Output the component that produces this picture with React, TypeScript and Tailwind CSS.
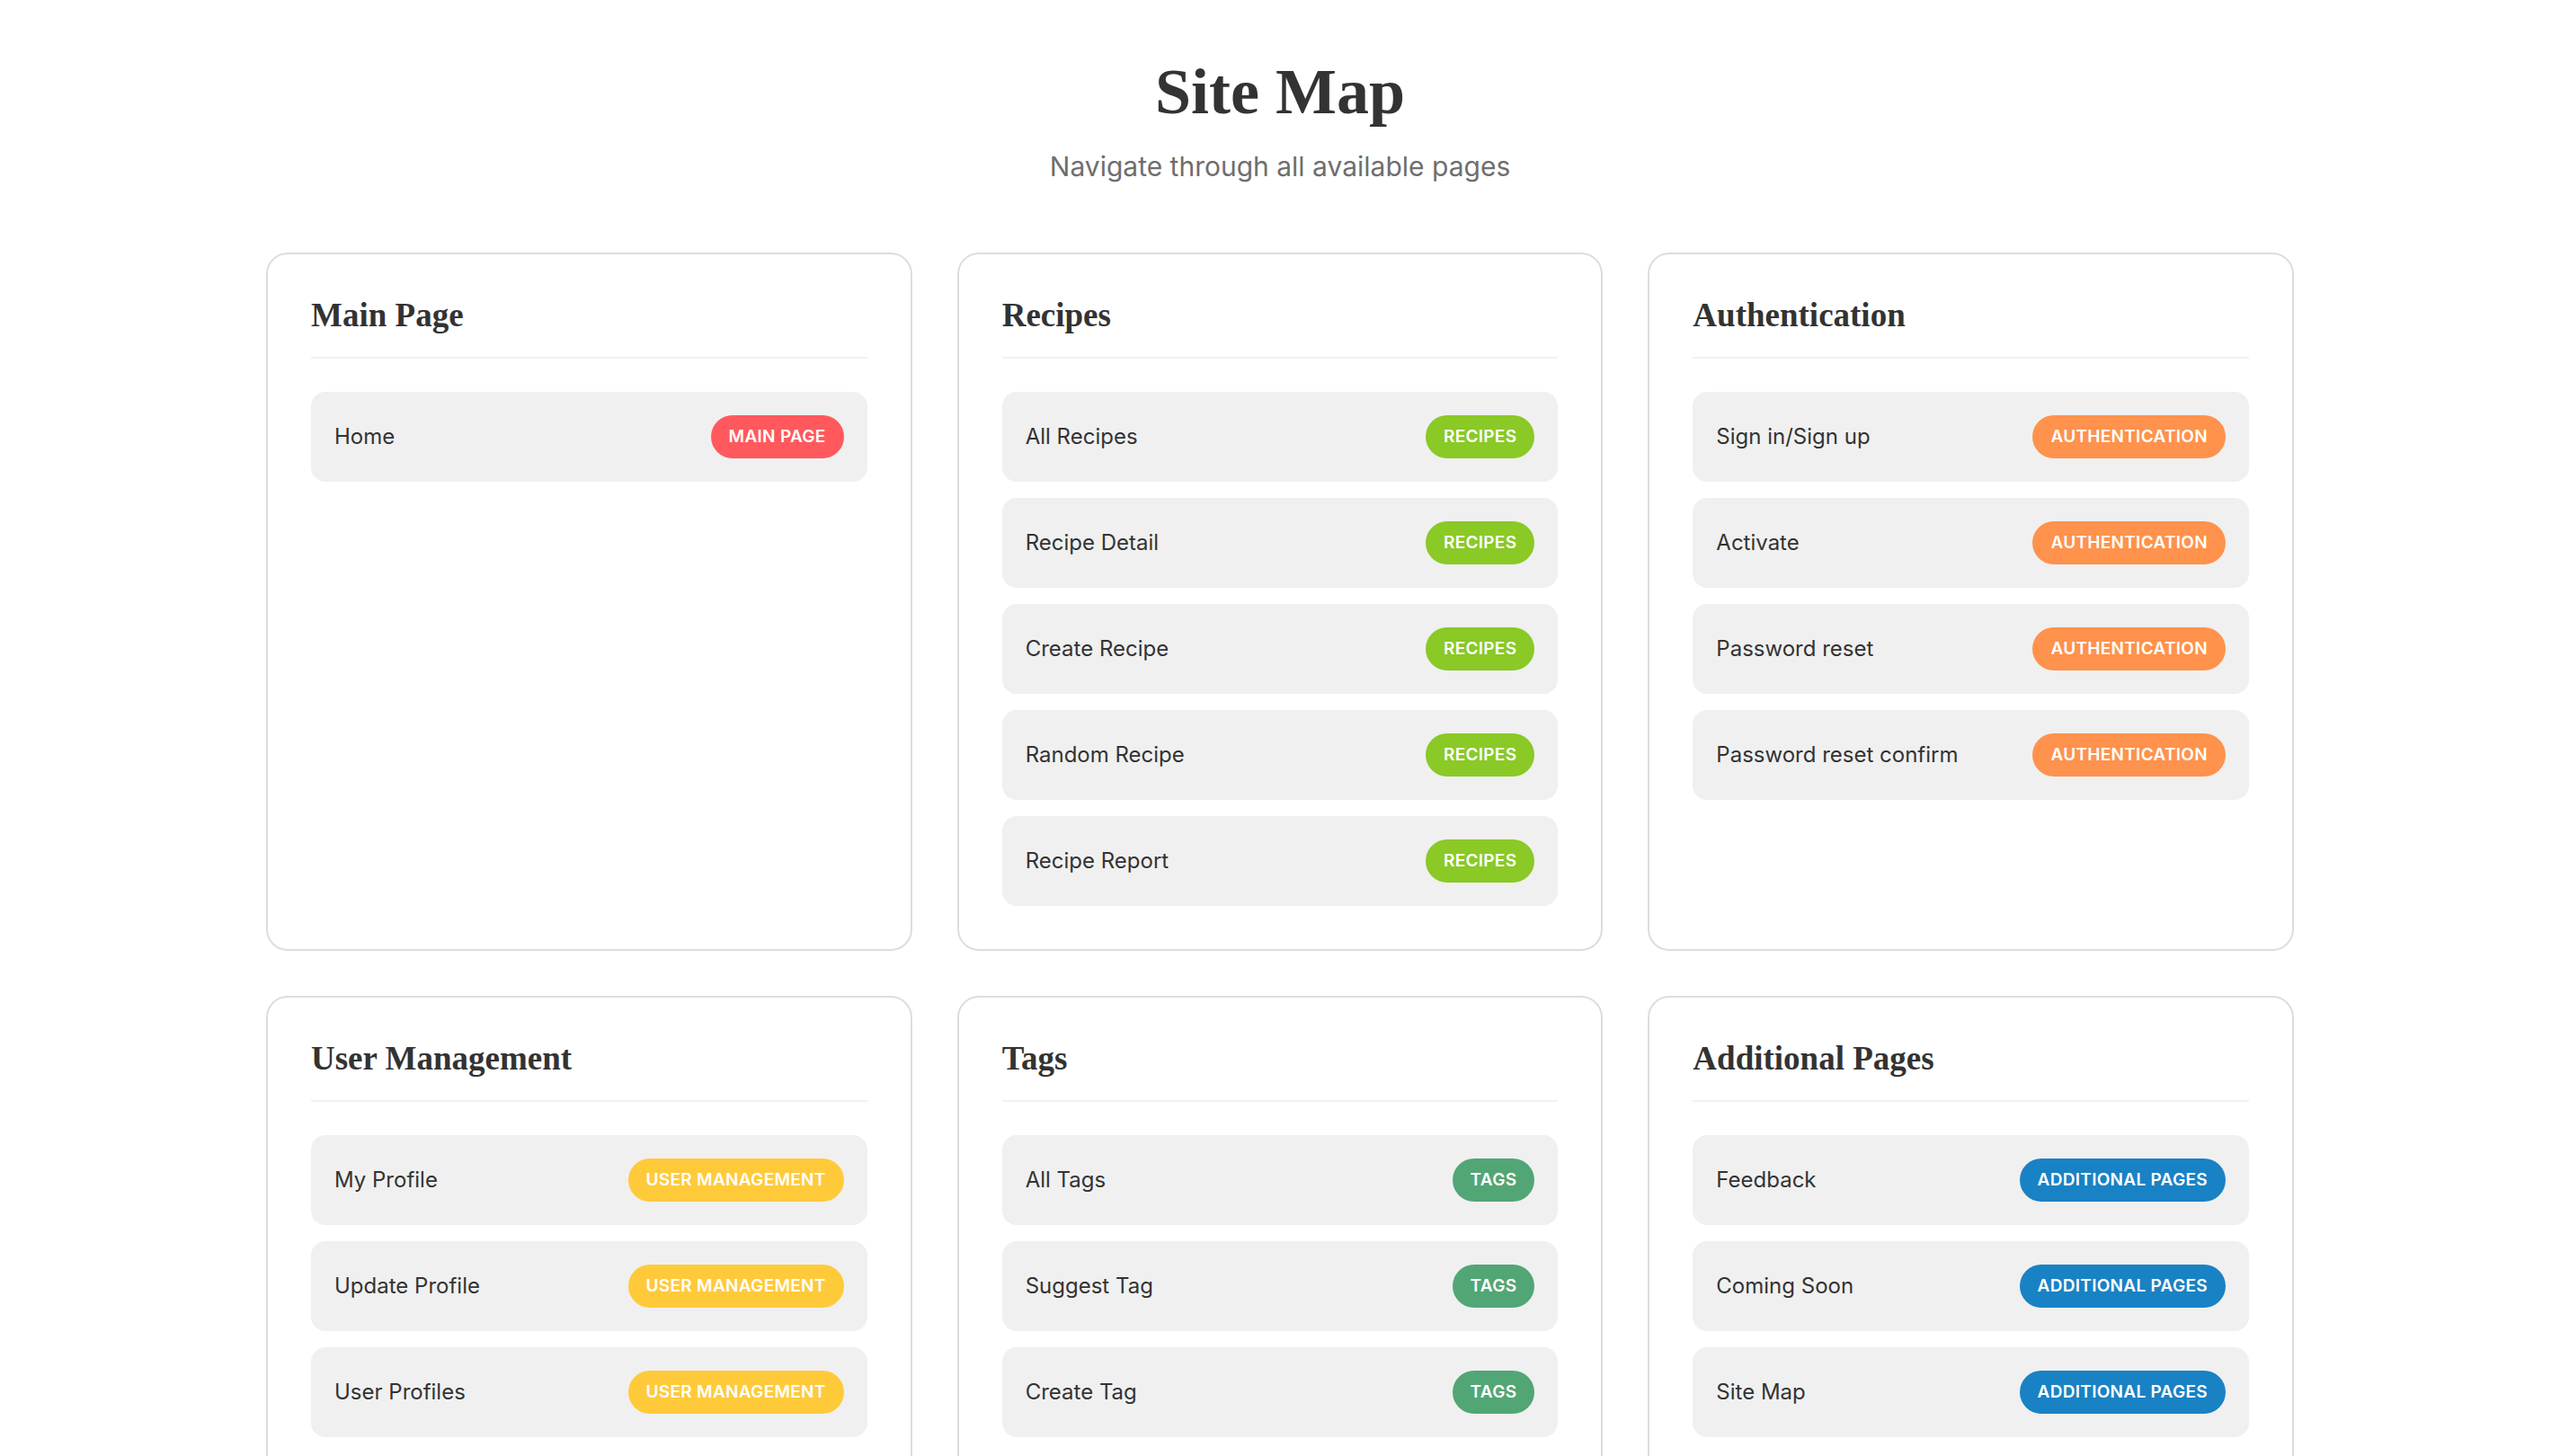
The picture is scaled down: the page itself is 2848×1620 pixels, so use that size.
const sections = [
  {
    title: "Main Page",
    badge: "Main Page",
    color: "bg-[#ff595e]",
    pages: ["Home"],
  },
  {
    title: "Recipes",
    badge: "Recipes",
    color: "bg-[#8ac926]",
    pages: [
      "All Recipes",
      "Recipe Detail",
      "Create Recipe",
      "Random Recipe",
      "Recipe Report",
    ],
  },
  {
    title: "Authentication",
    badge: "Authentication",
    color: "bg-[#ff924c]",
    pages: ["Sign in/Sign up", "Activate", "Password reset", "Password reset confirm"],
  },
  {
    title: "User Management",
    badge: "User Management",
    color: "bg-[#ffca3a]",
    pages: ["My Profile", "Update Profile", "User Profiles"],
  },
  {
    title: "Tags",
    badge: "Tags",
    color: "bg-[#52a675]",
    pages: ["All Tags", "Suggest Tag", "Create Tag"],
  },
  {
    title: "Additional Pages",
    badge: "Additional Pages",
    color: "bg-[#1982c4]",
    pages: ["Feedback", "Coming Soon", "Site Map"],
  },
];

export default function App() {
  return (
    <main className="min-h-screen bg-white pb-[60px] font-['Inter','Noto_Sans',sans-serif] text-[#333]">
      <header className="pt-[59px] text-center">
        <h1 className="font-['Liberation_Serif',serif] text-[72px] font-bold leading-[86px] text-[#333]">
          Site Map
        </h1>
        <p className="mt-[19px] text-[30px] leading-[42px] text-[#6e6e6e]">
          Navigate through all available pages
        </p>
      </header>
      <div className="mx-auto mt-[75px] grid w-[2256px] grid-cols-3 gap-[50px]">
        {sections.map((s) => (
          <section
            key={s.title}
            className="rounded-[24px] border-2 border-[#dddddd] bg-white p-[48px]"
          >
            <h2 className="mb-[37px] border-b-2 border-[#f0f0f0] pb-[26px] font-['Liberation_Serif',serif] text-[37px] font-bold leading-[40px] text-[#333]">
              {s.title}
            </h2>
            <ul className="flex flex-col gap-[18px]">
              {s.pages.map((p) => (
                <li
                  key={p}
                  className="flex h-[100px] items-center justify-between rounded-[16px] bg-[#f0f0f0] px-[26px]"
                >
                  <span className="text-[24px]">{p}</span>
                  <span
                    className={`${s.color} flex h-[48px] items-center rounded-full px-[20px] text-[19px] font-semibold uppercase tracking-[0.3px] text-white`}
                  >
                    {s.badge}
                  </span>
                </li>
              ))}
            </ul>
          </section>
        ))}
      </div>
    </main>
  );
}
